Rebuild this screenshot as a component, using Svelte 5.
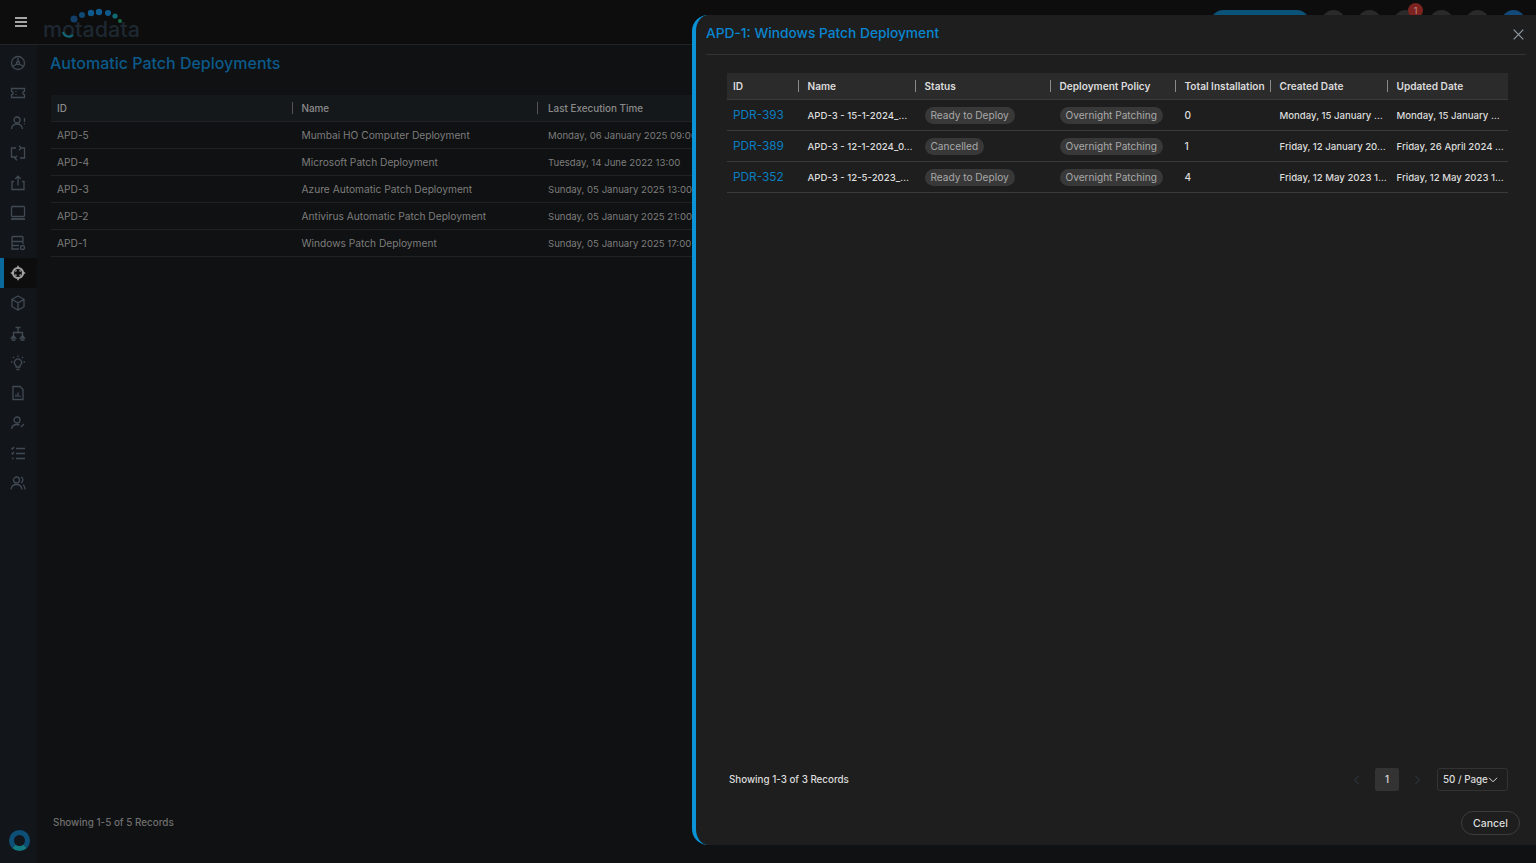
<script lang="ts">
	const deployments = [
		{ id: 'APD-5', name: 'Mumbai HO Computer Deployment', time: 'Monday, 06 January 2025 09:00' },
		{ id: 'APD-4', name: 'Microsoft Patch Deployment', time: 'Tuesday, 14 June 2022 13:00' },
		{ id: 'APD-3', name: 'Azure Automatic Patch Deployment', time: 'Sunday, 05 January 2025 13:00' },
		{ id: 'APD-2', name: 'Antivirus Automatic Patch Deployment', time: 'Sunday, 05 January 2025 21:00' },
		{ id: 'APD-1', name: 'Windows Patch Deployment', time: 'Sunday, 05 January 2025 17:00' }
	];

	const requests = [
		{ id: 'PDR-393', name: 'APD-3 - 15-1-2024_…', status: 'Ready to Deploy', total: 0, created: 'Monday, 15 January …', updated: 'Monday, 15 January …' },
		{ id: 'PDR-389', name: 'APD-3 - 12-1-2024_0…', status: 'Cancelled', total: 1, created: 'Friday, 12 January 20…', updated: 'Friday, 26 April 2024 …' },
		{ id: 'PDR-352', name: 'APD-3 - 12-5-2023_…', status: 'Ready to Deploy', total: 4, created: 'Friday, 12 May 2023 1…', updated: 'Friday, 12 May 2023 1…' }
	];

	const columns = ['ID', 'Name', 'Status', 'Deployment Policy', 'Total Installation', 'Created Date', 'Updated Date'];

	// one entry per sidebar icon, drawn on a 16x16 box
	const navIcons = [
		'<circle cx="8" cy="8" r="6.5"/><path d="M8 3v3.500M6.800 9L2.500 11.500M9.200 9l4.300 2.500"/><circle cx="8" cy="8" r="1.500"/>',
		'<path d="M1.500 3.500h13v2.800a1.700 1.700 0 0 0 0 3.400v2.800h-13V9.700a1.700 1.700 0 0 0 0-3.400zM6 6v1M6 9v1"/>',
		'<circle cx="7" cy="5" r="3"/><path d="M1.500 14c.4-3.500 2.500-5 5.500-5s5 1.500 5.500 5M14.500 3v4M14.500 8.500v1"/>',
		'<path d="M6 3H1.500v9H5M10 13h4.500V3H11M9 .8L11.200 3 9 5.200M7 10.800L4.800 13 7 15.200"/>',
		'<path d="M4 6.500H2v8h12v-8h-2M8 10.500V1.500M5.200 4L8 1.200 10.800 4"/>',
		'<rect x="1.500" y="1.500" width="13" height="10" rx="1"/><path d="M1 14h14" stroke-width="1.800"/>',
		'<rect x="2" y="1.500" width="11" height="5" rx="1"/><path d="M2 6.500V14h7M13 6.500V9M2 10.500h7"/><circle cx="12.500" cy="12.500" r="2"/>',
		'<circle cx="8" cy="8" r="5" stroke-width="2.200"/><path d="M8 .8v2M8 13.200v2M.8 8h2M13.200 8h2M5.400 5.400l1 1M10.600 5.400l-1 1M5.400 10.600l1-1M10.600 10.600l-1-1" stroke-width="1.600"/>',
		'<path d="M8 1l6 3.300v7.400L8 15l-6-3.300V4.300zM2 4.300L8 8l6-3.700M8 8v7"/>',
		'<path d="M5.500 2.500h5M8 2.500v5M3.500 10.500v-3h9v3M1.500 13l2-2.500 2 2.500zM10.500 13l2-2.500 2 2.500zM1.500 15h4M10.500 15h4"/>',
		'<path d="M5.500 10a3.500 3.500 0 1 1 5 0c-.5.500-.7 1-.7 2H6.200c0-1-.2-1.500-.7-2zM6.500 14.500h3M8 2V.5M2.500 7H1M15 7h-1.500M4 3L3 2M12 3l1-1"/>',
		'<path d="M3 1.500h7l3 3v10H3zM6 12V9.500M8 12V7.500M10 12v-1.500"/>',
		'<circle cx="7" cy="5" r="3"/><path d="M1.500 14c.4-3 2.500-4.500 5.500-4.500 1 0 1.800.2 2.500.5M11 12l3-3"/>',
		'<path d="M1.500 3l1 1 1.500-2M1.500 8l1 1L4 7M6 3.500h9M6 8.500h9M6 13.500h9M2 13.500h1.500"/>',
		'<circle cx="6.500" cy="5" r="3"/><path d="M1 14.500c.4-3.500 2.500-5 5.500-5s5 1.500 5.500 5M11 2.200a3 3 0 0 1 0 5.600M13 9.800c1.200.8 2 2.300 2.200 4.700"/>'
	];
</script>

<div class="page">
	<header class="topbar">
		<button class="menu" aria-label="Menu">
			<span></span><span></span><span></span>
		</button>
		<div class="logo">
			<span class="logo-text">motadata</span>
			<svg class="logo-dots" width="84" height="34" viewBox="0 0 84 34" fill="none">
				<circle cx="31" cy="13" r="3.500" fill="#12406a" />
				<circle cx="39" cy="9" r="3" fill="#0f4a75" />
				<circle cx="48" cy="7" r="3.200" fill="#0e5a8c" />
				<circle cx="56" cy="6" r="3.200" fill="#0e5a8c" />
				<circle cx="65" cy="7" r="3" fill="#0e5a8c" />
				<circle cx="72" cy="10" r="2.600" fill="#0e6a72" />
				<circle cx="77" cy="15" r="2" fill="#1a6a46" />
				<path d="M20 26a6 6 0 0 0 10 3" stroke="#0f6a78" stroke-width="2" />
			</svg>
		</div>
		<div class="top-actions">
			<span class="pill"></span>
			<span class="dot"></span>
			<span class="dot"></span>
			<span class="dot bell"><i>1</i></span>
			<span class="dot"></span>
			<span class="dot"></span>
			<span class="dot avatar"></span>
		</div>
	</header>

	<div class="body">
		<nav class="sidebar">
			<div class="nav-items">
				{#each navIcons as icon, i}
					<div class="nav-item" class:active={i === 7}>
						<svg width="16" height="16" viewBox="0 0 16 16" fill="none" stroke="currentColor" stroke-width="1.300">
							{@html icon}
						</svg>
					</div>
				{/each}
			</div>
			<div class="ring"></div>
		</nav>

		<main class="content">
			<h1>Automatic Patch Deployments</h1>
			<div class="grid-table">
				<div class="grid-row grid-head">
					<div>ID</div>
					<div>Name</div>
					<div>Last Execution Time</div>
				</div>
				{#each deployments as d}
					<div class="grid-row">
						<div>{d.id}</div>
						<div>{d.name}</div>
						<div class="time">{d.time}</div>
					</div>
				{/each}
			</div>
			<div class="records">Showing 1-5 of 5 Records</div>
		</main>
	</div>

	<aside class="drawer">
		<div class="drawer-title">
			<h2>APD-1: Windows Patch Deployment</h2>
			<button class="close" aria-label="Close">
				<svg width="11" height="11" viewBox="0 0 11 11" fill="none" stroke="currentColor" stroke-width="1.200"><path d="M.7.7l9.600 9.600M10.300.7L.7 10.300" /></svg>
			</button>
		</div>
		<div class="drawer-body">
			<div class="req-table">
				<div class="req-row req-head">
					{#each columns as c}
						<div>{c}</div>
					{/each}
				</div>
				{#each requests as r}
					<div class="req-row">
						<div class="link">{r.id}</div>
						<div class="cut">{r.name}</div>
						<div><span class="tag">{r.status}</span></div>
						<div><span class="tag">Overnight Patching</span></div>
						<div>{r.total}</div>
						<div class="cut">{r.created}</div>
						<div class="cut">{r.updated}</div>
					</div>
				{/each}
			</div>
			<div class="pager">
				<span class="pager-info">Showing 1-3 of 3 Records</span>
				<div class="pager-controls">
					<svg class="chev" width="7" height="10" viewBox="0 0 7 10" fill="none" stroke="currentColor"><path d="M5.500 1L1.500 5l4 4" /></svg>
					<span class="page-no">1</span>
					<svg class="chev" width="7" height="10" viewBox="0 0 7 10" fill="none" stroke="currentColor"><path d="M1.500 1l4 4-4 4" /></svg>
					<span class="page-size">50 / Page
						<svg width="10" height="6" viewBox="0 0 10 6" fill="none" stroke="currentColor"><path d="M1 .8l4 4 4-4" /></svg>
					</span>
				</div>
			</div>
		</div>
		<div class="drawer-foot">
			<button class="cancel">Cancel</button>
		</div>
	</aside>
</div>

<style>
	:global(body) {
		margin: 0;
		background: #101112;
		font-family: Inter, "Liberation Sans", sans-serif;
	}

	.page {
		position: relative;
		height: 863px;
		overflow: hidden;
		display: flex;
		flex-direction: column;
		color: #8a8a8a;
	}

	.topbar {
		height: 44px;
		flex: none;
		display: flex;
		align-items: center;
		background: #0d0d0e;
		border-bottom: 1px solid #232425;
	}

	.menu {
		width: 12px;
		margin-left: 15px;
		padding: 0;
		background: none;
		border: none;
		display: flex;
		flex-direction: column;
		gap: 2px;
	}

	.menu span {
		height: 2px;
		background: #a5a5a5;
	}

	.logo {
		position: relative;
		margin-left: 16px;
		width: 100px;
		height: 44px;
	}

	.logo-dots {
		position: absolute;
		left: 0;
		top: 6px;
	}

	.logo-text {
		position: absolute;
		left: 0;
		top: 15px;
		font-size: 21.500px;
		line-height: 28px;
		font-weight: 500;
		color: #1e2831;
	}

	.top-actions {
		margin-left: auto;
		margin-right: 11px;
		align-self: flex-start;
		padding-top: 10px;
		display: flex;
		gap: 13px;
	}

	.pill {
		width: 98px;
		height: 24px;
		border-radius: 12px;
		background: #0b5278;
	}

	.dot {
		position: relative;
		width: 23px;
		height: 23px;
		border-radius: 50%;
		background: #2a2a2b;
	}

	.avatar {
		background: #134a7a;
	}

	.bell i {
		position: absolute;
		top: -7px;
		right: -6px;
		width: 15px;
		height: 15px;
		border-radius: 50%;
		background: #7c2320;
		color: #c58a88;
		font-size: 9px;
		font-style: normal;
		line-height: 15px;
		text-align: center;
	}

	.body {
		flex: 1;
		display: flex;
		min-height: 0;
	}

	.sidebar {
		width: 37px;
		flex: none;
		background: #12161b;
		display: flex;
		flex-direction: column;
		color: #414a52;
	}

	.nav-items {
		padding-top: 3px;
	}

	.nav-item {
		height: 30px;
		display: flex;
		align-items: center;
		justify-content: center;
		padding-right: 1px;
		box-sizing: border-box;
	}

	.nav-item.active {
		background: #0d0d0e;
		border-left: 4px solid #0b6a9c;
		color: #a5a5a5;
		padding-right: 5px;
	}

	.ring {
		margin: auto 0 12px 9px;
		width: 21px;
		height: 21px;
		box-sizing: border-box;
		border: 5px solid #0d4f77;
		border-bottom-color: #127a80;
		border-radius: 50%;
	}

	.content {
		flex: 1;
		min-width: 0;
		padding: 0 0 0 13px;
		display: flex;
		flex-direction: column;
	}

	h1 {
		margin: 8px 0 22px 0;
		font-size: 16px;
		line-height: 20px;
		font-weight: 500;
		color: #0b5a8a;
	}

	.grid-table {
		margin-left: 1px;
	}

	.grid-row {
		display: grid;
		grid-template-columns: 243px 245px 246px;
		height: 27px;
		align-items: center;
		border-bottom: 1px solid #202122;
		font-size: 10.200px;
		color: #7d7d7d;
		box-sizing: border-box;
	}

	.grid-row > div {
		padding-left: 6px;
		position: relative;
	}

	.grid-row > div + div {
		padding-left: 7.500px;
	}

	.grid-row > div:nth-child(3) {
		padding-left: 9px;
	}

	.grid-head {
		background: #15181b;
		font-weight: 500;
		color: #8a8a8a;
		font-size: 9.900px;
	}

	.grid-head > div + div::before {
		content: '';
		position: absolute;
		left: -2px;
		top: 0;
		width: 1px;
		height: 12px;
		background: #555;
	}

	.time {
		white-space: nowrap;
		font-size: 9.600px;
	}

	.records {
		margin: auto 0 35px 3px;
		font-size: 9.900px;
		font-weight: 500;
		color: #6f6f6f;
	}

	.drawer {
		position: absolute;
		left: 692px;
		right: 0;
		top: 15px;
		bottom: 18px;
		box-sizing: border-box;
		background: #1e1e1e;
		border-left: 4px solid #0a93d6;
		border-radius: 16px 0 0 16px;
		display: flex;
		flex-direction: column;
		color: #dcdcdc;
	}

	.drawer-title {
		height: 39px;
		margin: 0 10px;
		flex: none;
		display: flex;
		align-items: center;
		justify-content: space-between;
		border-bottom: 1px solid #333;
	}

	h2 {
		margin: 0 0 3px;
		font-size: 13.750px;
		font-weight: 500;
		color: #0a86d0;
	}

	.close {
		padding: 0;
		margin: 2px 2px 0 0;
		background: none;
		border: none;
		color: #8f9aa3;
	}

	.drawer-body {
		flex: 1;
		min-height: 0;
		padding: 18px 28px 0 31px;
		display: flex;
		flex-direction: column;
	}

	.req-row {
		display: grid;
		grid-template-columns: 71px 117px 135px 125px 95px 117px 121px;
		height: 31px;
		align-items: center;
		border-bottom: 1px solid #3a3a3a;
		box-sizing: border-box;
		font-size: 10.100px;
		font-weight: 500;
		white-space: nowrap;
	}

	.req-row > div {
		position: relative;
		padding-left: 6px;
	}

	.req-row > div + div {
		padding-left: 9.500px;
	}

	.req-head {
		height: 27px;
		background: #2b2b2b;
		font-weight: 600;
	}

	.req-head > div + div::before {
		content: '';
		position: absolute;
		left: 0;
		top: 0;
		width: 1px;
		height: 12px;
		background: #8a8a8a;
	}

	.req-row .cut {
		font-size: 9.600px;
	}

	.link {
		color: #0a7fc2;
		font-size: 11.800px;
		font-weight: 400;
	}

	.tag {
		display: inline-block;
		padding: 0 6px;
		height: 17px;
		line-height: 17px;
		border-radius: 9px;
		background: #383838;
		color: #a8a8a8;
		font-weight: 400;
	}

	.pager {
		margin-top: auto;
		margin-bottom: 20px;
		padding-left: 2px;
		display: flex;
		align-items: center;
		justify-content: space-between;
		font-size: 9.800px;
		font-weight: 500;
	}

	.pager-controls {
		display: flex;
		align-items: center;
		gap: 15px;
	}

	.chev {
		color: #2e3b47;
		flex: none;
	}

	.page-no {
		width: 24px;
		height: 23px;
		line-height: 23px;
		text-align: center;
		border-radius: 2px;
		background: #333;
	}

	.page-size {
		width: 71px;
		height: 23px;
		margin-left: 1px;
		box-sizing: border-box;
		padding: 0 9px 0 5px;
		border: 1px solid #333;
		border-radius: 3px;
		display: flex;
		align-items: center;
		justify-content: space-between;
		white-space: nowrap;
	}

	.page-size svg {
		flex: none;
	}

	.drawer-foot {
		flex: none;
		height: 34px;
		padding-right: 16px;
		display: flex;
		justify-content: flex-end;
		align-items: flex-start;
	}

	.cancel {
		width: 59px;
		height: 24px;
		padding: 0;
		background: none;
		border: 1px solid #3d3d3d;
		border-radius: 12px;
		color: #dcdcdc;
		font: inherit;
		font-size: 10.500px;
		font-weight: 500;
	}
</style>
